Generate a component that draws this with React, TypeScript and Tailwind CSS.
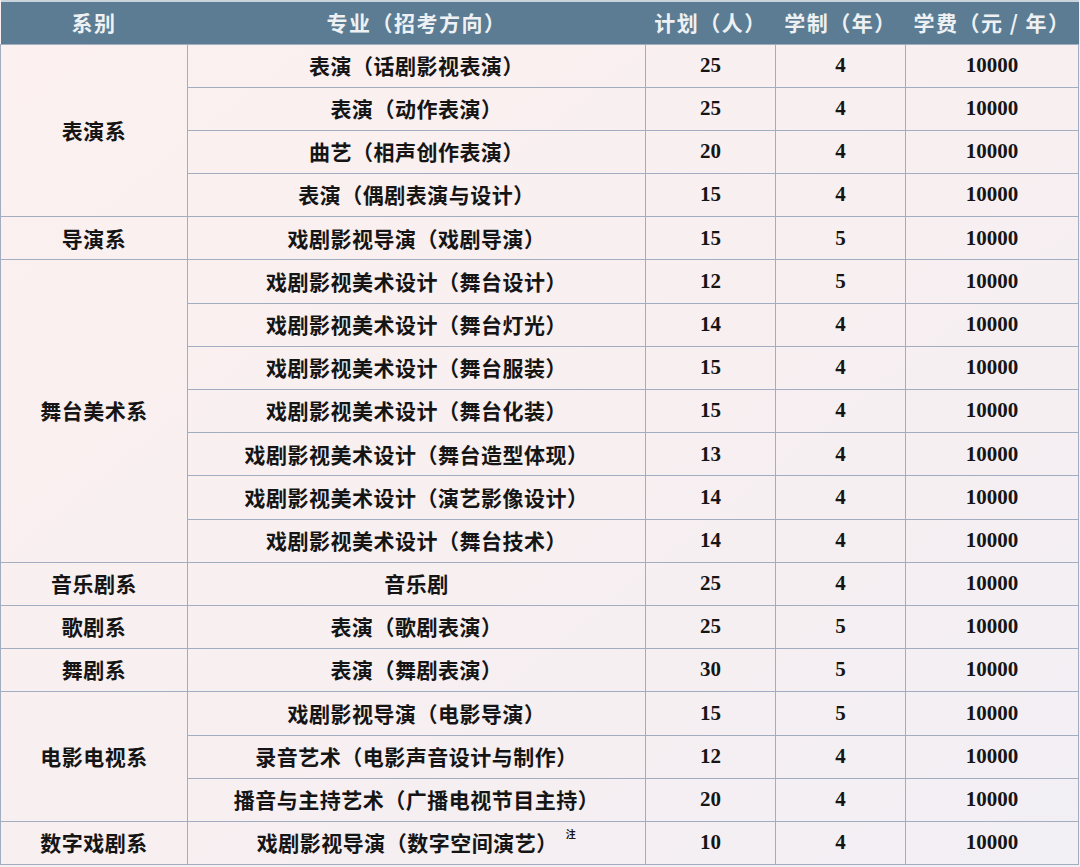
import React from "react";

type Row = { major: string; plan: string; years: string; fee: string; note?: boolean };
type Group = { dept: string; rows: Row[] };

const data: Group[] = [
  {
    dept: "表演系",
    rows: [
      { major: "表演（话剧影视表演）", plan: "25", years: "4", fee: "10000" },
      { major: "表演（动作表演）", plan: "25", years: "4", fee: "10000" },
      { major: "曲艺（相声创作表演）", plan: "20", years: "4", fee: "10000" },
      { major: "表演（偶剧表演与设计）", plan: "15", years: "4", fee: "10000" },
    ],
  },
  { dept: "导演系", rows: [{ major: "戏剧影视导演（戏剧导演）", plan: "15", years: "5", fee: "10000" }] },
  {
    dept: "舞台美术系",
    rows: [
      { major: "戏剧影视美术设计（舞台设计）", plan: "12", years: "5", fee: "10000" },
      { major: "戏剧影视美术设计（舞台灯光）", plan: "14", years: "4", fee: "10000" },
      { major: "戏剧影视美术设计（舞台服装）", plan: "15", years: "4", fee: "10000" },
      { major: "戏剧影视美术设计（舞台化装）", plan: "15", years: "4", fee: "10000" },
      { major: "戏剧影视美术设计（舞台造型体现）", plan: "13", years: "4", fee: "10000" },
      { major: "戏剧影视美术设计（演艺影像设计）", plan: "14", years: "4", fee: "10000" },
      { major: "戏剧影视美术设计（舞台技术）", plan: "14", years: "4", fee: "10000" },
    ],
  },
  { dept: "音乐剧系", rows: [{ major: "音乐剧", plan: "25", years: "4", fee: "10000" }] },
  { dept: "歌剧系", rows: [{ major: "表演（歌剧表演）", plan: "25", years: "5", fee: "10000" }] },
  { dept: "舞剧系", rows: [{ major: "表演（舞剧表演）", plan: "30", years: "5", fee: "10000" }] },
  {
    dept: "电影电视系",
    rows: [
      { major: "戏剧影视导演（电影导演）", plan: "15", years: "5", fee: "10000" },
      { major: "录音艺术（电影声音设计与制作）", plan: "12", years: "4", fee: "10000" },
      { major: "播音与主持艺术（广播电视节目主持）", plan: "20", years: "4", fee: "10000" },
    ],
  },
  {
    dept: "数字戏剧系",
    rows: [{ major: "戏剧影视导演（数字空间演艺）", plan: "10", years: "4", fee: "10000", note: true }],
  },
];

const cjk = "font-['Noto_Sans_CJK_SC',sans-serif]";
const num = "font-['Liberation_Serif','Noto_Sans_CJK_SC',serif]";
const cell = "border-[1.5px] border-[#a3adc0] text-center align-middle p-0";

export default function App() {
  return (
    <div className="w-[1080px] h-[867px] overflow-hidden bg-gradient-to-br from-[#fcf1f0] via-[#f8eff0] to-[#f2eff5]">
      <table className="w-[1078px] table-fixed border-collapse">
        <colgroup>
          <col className="w-[187px]" />
          <col className="w-[458px]" />
          <col className="w-[130px]" />
          <col className="w-[130px]" />
          <col className="w-[173px]" />
        </colgroup>
        <thead>
          <tr className="h-[43px] bg-[#5b7c92] border-t-2 border-[#c9d3dc]">
            {["系别", "专业（招考方向）", "计划（人）", "学制（年）", "学费（元 / 年）"].map((h) => (
              <th
                key={h}
                className={`${cjk} text-[21px] font-bold text-[#eef1f4] text-center align-middle tracking-[1.5px]`}
              >
                {h}
              </th>
            ))}
          </tr>
        </thead>
        <tbody className="text-[#151515]">
          {data.map((g) =>
            g.rows.map((r, i) => (
              <tr key={g.dept + i} className="h-[43.2px]">
                {i === 0 && (
                  <td
                    rowSpan={g.rows.length}
                    className={`${cell} ${cjk} text-[21px] font-bold tracking-[0.5px]`}
                  >
                    {g.dept}
                  </td>
                )}
                <td className={`${cell} ${cjk} text-[21px] font-bold tracking-[0.5px]`}>
                  {r.major}
                  {r.note && <sup className="text-[10px] ml-[8px] align-[8px]">注</sup>}
                </td>
                <td className={`${cell} ${num} text-[21px] font-bold`}>{r.plan}</td>
                <td className={`${cell} ${num} text-[21px] font-bold`}>{r.years}</td>
                <td className={`${cell} ${num} text-[21px] font-bold`}>{r.fee}</td>
              </tr>
            ))
          )}
        </tbody>
      </table>
    </div>
  );
}
